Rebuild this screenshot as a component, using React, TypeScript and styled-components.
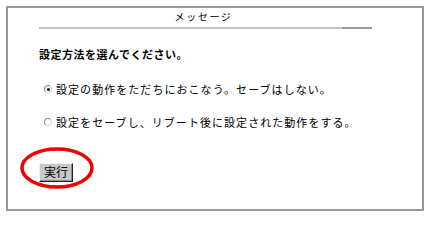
import styled, { createGlobalStyle } from 'styled-components';

const GlobalStyle = createGlobalStyle`
  body {
    margin: 0;
    background: #ffffff;
    font-family: "Noto Sans CJK JP", "DejaVu Sans", sans-serif;
    color: #000000;
  }
`

const Frame = styled.div`
  margin: 6px 0 0 6px;
  width: 418px;
  height: 205px;
  box-sizing: border-box;
  border: 2px solid #9a9a9a;
  padding: 0 0 0 31px;
  display: flex;
  flex-direction: column;
  align-items: flex-start;
`

const Header = styled.div`
  width: 333px;
  display: flex;
  flex-direction: column;
  align-items: center;
`

const Title = styled.div`
  margin-top: 3px;
  font-size: 10px;
  line-height: 12px;
  letter-spacing: 1.6px;
  padding-right: 4px;
`

const Rule = styled.div`
  margin-top: 4px;
  width: 100%;
  height: 2px;
  background: linear-gradient(to right, #c4c2d6 0, #c4c2d6 91%, #9a9aa4 91%, #9a9aa4 100%);
`

const Heading = styled.div`
  margin-top: 18px;
  font-size: 11px;
  line-height: 14px;
  font-weight: bold;
  letter-spacing: 0.5px;
`

const Option = styled.label<{ $gap: number }>`
  margin-top: ${p => p.$gap}px;
  margin-left: 5px;
  display: flex;
  align-items: center;
  font-size: 11px;
  line-height: 14px;
  letter-spacing: 1.05px;
`

const Radio = styled.span<{ $on?: boolean }>`
  width: 8px;
  height: 8px;
  border-radius: 50%;
  box-sizing: border-box;
  border: 1px solid #8a8a8a;
  border-right-color: #d4d4d4;
  border-bottom-color: #d4d4d4;
  margin-right: 4px;
  display: flex;
  align-items: center;
  justify-content: center;

  &::after {
    content: '';
    width: 3px;
    height: 3px;
    border-radius: 50%;
    background: ${p => (p.$on ? '#000000' : 'transparent')};
  }
`

const ButtonWrap = styled.div`
  margin-top: 29px;
  position: relative;
`

const RunButton = styled.button`
  width: 34px;
  height: 19px;
  padding: 0;
  box-sizing: border-box;
  background: #c6c9c9;
  border: 1px solid;
  border-color: #f2f2f2 #222222 #222222 #f2f2f2;
  box-shadow: inset -1px -1px 0 #8c8c8c;
  font-family: "Noto Sans CJK JP", sans-serif;
  font-size: 12px;
  line-height: 16px;
  color: #000000;
`

const Mark = styled.svg`
  position: absolute;
  left: -18px;
  top: -10px;
  overflow: visible;
  pointer-events: none;
`

export default function App() {
  return (
    <>
      <GlobalStyle />
      <Frame>
        <Header>
          <Title>メッセージ</Title>
          <Rule />
        </Header>
        <Heading>設定方法を選んでください。</Heading>
        <Option $gap={21}>
          <Radio $on />
          設定の動作をただちにおこなう。セーブはしない。
        </Option>
        <Option $gap={19}>
          <Radio />
          設定をセーブし、リブート後に設定された動作をする。
        </Option>
        <ButtonWrap>
          <RunButton>実行</RunButton>
          <Mark width="72" height="40" viewBox="0 0 72 40">
            <ellipse cx="36" cy="20" rx="35" ry="19" fill="none" stroke="#ee0000" strokeWidth="3.5" />
          </Mark>
        </ButtonWrap>
      </Frame>
    </>
  );
}
